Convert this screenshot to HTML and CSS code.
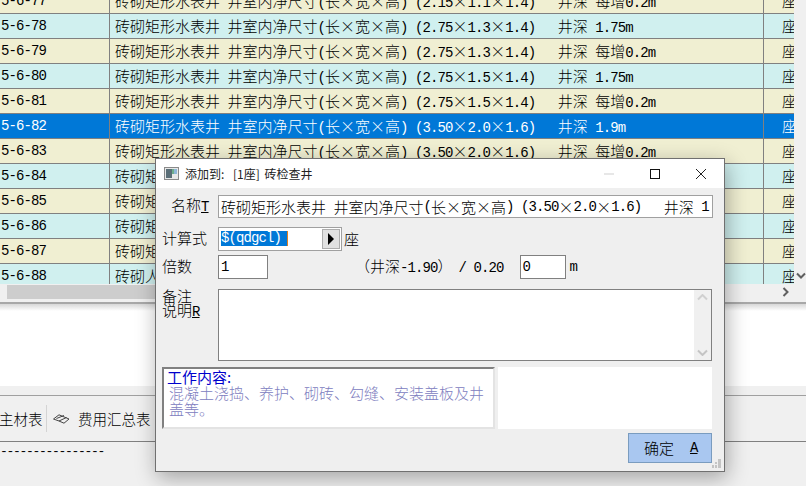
FILE: index.html
```html
<!DOCTYPE HTML>
<html lang="zh-CN">

<head>
  <meta charset="utf-8">
  <title>添加到</title>
  <link rel="stylesheet" href="styles.css">
</head>

<body>

  <div class="top">
    <div class="grid">
      <div class="row"><div class="code">5-6-77</div><div class="name">砖砌矩形水表井<span class="hw"> </span>井室内净尺寸<span class="hw">(</span>长×宽×高<span class="hw">) (2.15</span>×<span class="hw">1.1</span>×<span class="hw">1.4)   </span>井深<span class="hw"> </span>每增<span class="hw">0.2m</span></div><div class="unit">座</div></div>
      <div class="row"><div class="code">5-6-78</div><div class="name">砖砌矩形水表井<span class="hw"> </span>井室内净尺寸<span class="hw">(</span>长×宽×高<span class="hw">) (2.75</span>×<span class="hw">1.3</span>×<span class="hw">1.4)   </span>井深<span class="hw"> 1.75m</span></div><div class="unit">座</div></div>
      <div class="row"><div class="code">5-6-79</div><div class="name">砖砌矩形水表井<span class="hw"> </span>井室内净尺寸<span class="hw">(</span>长×宽×高<span class="hw">) (2.75</span>×<span class="hw">1.3</span>×<span class="hw">1.4)   </span>井深<span class="hw"> </span>每增<span class="hw">0.2m</span></div><div class="unit">座</div></div>
      <div class="row"><div class="code">5-6-80</div><div class="name">砖砌矩形水表井<span class="hw"> </span>井室内净尺寸<span class="hw">(</span>长×宽×高<span class="hw">) (2.75</span>×<span class="hw">1.5</span>×<span class="hw">1.4)   </span>井深<span class="hw"> 1.75m</span></div><div class="unit">座</div></div>
      <div class="row"><div class="code">5-6-81</div><div class="name">砖砌矩形水表井<span class="hw"> </span>井室内净尺寸<span class="hw">(</span>长×宽×高<span class="hw">) (2.75</span>×<span class="hw">1.5</span>×<span class="hw">1.4)   </span>井深<span class="hw"> </span>每增<span class="hw">0.2m</span></div><div class="unit">座</div></div>
      <div class="row selected"><div class="code">5-6-82</div><div class="name">砖砌矩形水表井<span class="hw"> </span>井室内净尺寸<span class="hw">(</span>长×宽×高<span class="hw">) (3.50</span>×<span class="hw">2.0</span>×<span class="hw">1.6)   </span>井深<span class="hw"> 1.9m</span></div><div class="unit">座</div></div>
      <div class="row"><div class="code">5-6-83</div><div class="name">砖砌矩形水表井<span class="hw"> </span>井室内净尺寸<span class="hw">(</span>长×宽×高<span class="hw">) (3.50</span>×<span class="hw">2.0</span>×<span class="hw">1.6)   </span>井深<span class="hw"> </span>每增<span class="hw">0.2m</span></div><div class="unit">座</div></div>
      <div class="row"><div class="code">5-6-84</div><div class="name">砖砌矩形水表井</div><div class="unit">座</div></div>
      <div class="row"><div class="code">5-6-85</div><div class="name">砖砌矩形水表井</div><div class="unit">座</div></div>
      <div class="row"><div class="code">5-6-86</div><div class="name">砖砌矩形水表井</div><div class="unit">座</div></div>
      <div class="row"><div class="code">5-6-87</div><div class="name">砖砌矩形水表井</div><div class="unit">座</div></div>
      <div class="row"><div class="code">5-6-88</div><div class="name">砖砌人孔</div><div class="unit">座</div></div>
    </div>
    <div class="vscroll">
      <svg width="10" height="8" viewBox="0 0 10 8"><path d="M1 1.5 5 5.5 9 1.5" fill="none" stroke="#606060" stroke-width="2"/></svg>
    </div>
  </div>

  <div class="hscroll">
    <div class="thumb"></div>
    <svg width="8" height="10" viewBox="0 0 8 10"><path d="M1.5 1 5.5 5 1.5 9" fill="none" stroke="#606060" stroke-width="2"/></svg>
  </div>

  <div class="splitter"></div>
  <div class="blank"></div>

  <div class="tabs">
    <div class="tab tab-first">主材表</div>
    <div class="tab">
      <svg class="tab-icon" width="17" height="10" viewBox="0 0 17 10"><path d="M.5 5 6 .8 16 5 11 9.2 6 7 .5 5ZM3.5 4.5 11 1.5M6 7 13.5 3.5" fill="none" stroke="#444"/></svg>
      费用汇总表
    </div>
  </div>

  <div class="log">----------------</div>

  <div class="dialog">
    <div class="titlebar">
      <svg class="app-icon" width="15" height="13" viewBox="0 0 15 13">
        <rect x=".5" y=".5" width="14" height="12" fill="#e8e8e8" stroke="#8a8a8a"/>
        <rect x="2" y="2" width="6" height="9" fill="#5b6f78"/>
        <rect x="8" y="2" width="2" height="5" fill="#6fae8c"/>
        <rect x="10" y="2" width="3" height="5" fill="#8fb7d8"/>
      </svg>
      <span class="title-text">添加到: <span class="title-count">[1座]</span> 砖检查井</span>
      <svg class="win-btn" width="12" height="12" viewBox="0 0 12 12"><path d="M1 6H11" stroke="#cfcfcf"/></svg>
      <svg class="win-btn" width="12" height="12" viewBox="0 0 12 12"><rect x="1.5" y="1.5" width="9" height="9" fill="none" stroke="#111"/></svg>
      <svg class="win-btn" width="12" height="12" viewBox="0 0 12 12"><path d="M1 1 11 11M11 1 1 11" stroke="#222"/></svg>
    </div>

    <div class="dialog-body">
      <div class="field name-field">
        <label class="label label-name">名称<span class="key">T</span></label>
        <div class="input name-input">砖砌矩形水表井<span class="hw"> </span>井室内净尺寸<span class="hw">(</span>长×宽×高<span class="hw">) (3.50</span>×<span class="hw">2.0</span>×<span class="hw">1.6)   </span>井深<span class="hw"> 1</span></div>
      </div>

      <div class="field calc-field">
        <label class="label">计算式</label>
        <div class="input calc-input">
          <span class="sel hw">$(qdgcl)</span>
          <span class="calc-btn"><svg width="8" height="12" viewBox="0 0 8 12"><path d="M1 0 7 6 1 12Z" fill="#000"/></svg></span>
        </div>
        <span class="after">座</span>
      </div>

      <div class="field times-field">
        <label class="label">倍数</label>
        <div class="input small-input"><span class="hw">1</span></div>
        <span class="formula">（井深<span class="hw">-1.90</span>）<span class="hw divide">/ 0.20</span></span>
        <div class="input small-input extra-input"><span class="hw">0</span></div>
        <span class="after hw">m</span>
      </div>

      <div class="field note-field">
        <label class="label label-note">备注<br>说明<span class="key">R</span></label>
        <div class="textarea">
          <div class="textarea-scroll">
            <svg width="11" height="7" viewBox="0 0 11 7"><path d="M1 5.5 5.5 1 10 5.5" fill="none" stroke="#d0d0d0" stroke-width="2"/></svg>
            <svg width="11" height="7" viewBox="0 0 11 7"><path d="M1 1.5 5.5 6 10 1.5" fill="none" stroke="#c4c4c4" stroke-width="2"/></svg>
          </div>
        </div>
      </div>

      <div class="info">
        <div class="work">
          <div class="work-title">工作内容:</div>
          <div class="work-text">混凝土浇捣、养护、砌砖、勾缝、安装盖板及井盖等。</div>
        </div>
        <div class="info-right"></div>
      </div>

      <div class="actions">
        <button class="ok">确定<span class="ok-key">A</span></button>
      </div>
    </div>

    <svg class="grip" width="9" height="9" viewBox="0 0 9 9"><path d="M6 0h3v3H6zM3 3h2v2H3zM6 3h3v3H6zM0 6h2v3H0zM3 6h2v3H3zM6 6h3v3H6z" fill="#c4c4c4"/></svg>
  </div>

</body>

</html>
```
FILE: styles.css
```css
html, body {
  margin: 0;
  height: 100%;
}

body {
  position: relative;
  width: 806px;
  height: 486px;
  overflow: hidden;
  background: #f0f0f0;
  color: #000;
  font: 300 15px/18px "Noto Sans CJK SC", sans-serif;
}

/* half width latin, 7.5px a char like the old bitmap font */
.hw,
.key,
.ok-key,
.code {
  font: 14px/18px "Liberation Mono", monospace;
  letter-spacing: -.9px;
  white-space: pre;
}

.top {
  display: flex;
  height: 284px;
  overflow: hidden;
}

.grid {
  width: 794px;
  overflow: hidden;
}

.row {
  display: grid;
  grid-template-columns: 109px 654px 31px;
  height: 25px;
  box-sizing: border-box;
  border-bottom: 1px solid #808080;
  background: #f0efd2;
  line-height: 24px;
  white-space: nowrap;
}

.row:first-child {
  margin-top: -11px;
}

.row:nth-child(even) {
  background: #d0f0ef;
}

.row.selected {
  background: #0078d7;
  color: #fff;
}

.code {
  padding-left: 1px;
  line-height: 24px;
}

.name {
  overflow: hidden;
  padding-left: 5px;
  border-left: 1px solid #808080;
}

.unit {
  overflow: hidden;
  padding-left: 18px;
  border-left: 1px solid #808080;
}

.vscroll {
  display: flex;
  flex: 1;
  align-items: flex-end;
  justify-content: flex-end;
  padding-bottom: 4px;
}

.hscroll {
  display: flex;
  align-items: center;
  justify-content: space-between;
  height: 16px;
  padding: 0 16px 0 7px;
}

.thumb {
  width: 700px;
  height: 14px;
  background: #cdcdcd;
}

.splitter {
  height: 2px;
  margin-top: 2px;
  background: #a8a8a8;
}

.blank {
  height: 82px;
  background: linear-gradient(#d8d8d8, #fff 7px);
}

.tabs {
  display: flex;
  align-items: center;
  height: 47px;
  margin-top: 9px;
  border-top: 1px solid #a0a0a0;
  border-bottom: 1px solid #808080;
  box-sizing: border-box;
}

.tab {
  display: flex;
  align-items: center;
  height: 27px;
  font-size: 14.5px;
}

.tab-first {
  width: 47px;
  margin-left: -1px;
  padding-left: 0;
  border-right: 1px solid #d4d4d4;
}

.tab-icon {
  margin: 0 8px 0 6px;
}

.log {
  padding-top: 2px;
  font: 13px/16px "Liberation Mono", monospace;
  letter-spacing: -1.3px;
}

.dialog {
  position: absolute;
  left: 155px;
  top: 158px;
  width: 568px;
  height: 312px;
  border: 1px solid #707070;
  background: #efefef;
  box-shadow: 2px 6px 20px rgba(0, 0, 0, .32);
}

.titlebar {
  display: flex;
  align-items: center;
  height: 29px;
  padding: 0 17px 0 8px;
  background: #fff;
}

.app-icon {
  margin-right: 6px;
}

.title-text {
  flex: 1;
  color: #222;
  font-size: 12px;
  font-weight: 400;
}

.title-count {
  margin: 0 2px 0 6px;
}

.win-btn {
  margin-left: 34px;
}

.dialog-body {
  padding: 7px 11px 0 6px;
}

.field {
  display: flex;
  align-items: center;
}

.label {
  width: 56px;
  flex: none;
  padding-bottom: 2px;
}

.label-name {
  box-sizing: border-box;
  padding-left: 9px;
}

.key {
  text-decoration: underline;
}

.input {
  display: flex;
  align-items: center;
  box-sizing: border-box;
  padding-left: 2px;
  background: #fff;
  white-space: nowrap;
}

.name-input {
  width: 496px;
  height: 23px;
  overflow: hidden;
  border: 1px solid #a0a0a0;
}

.calc-field {
  margin-top: 9px;
}

.calc-input {
  position: relative;
  width: 124px;
  height: 24px;
  border: 1px solid #a0a0a0;
}

.sel {
  margin-bottom: 1px;
  padding-right: 6px;
  background: #0078d7;
  box-shadow: 1px 0 0 #e08020;
  color: #fff;
  line-height: 15px;
}

.calc-btn {
  display: flex;
  align-items: center;
  justify-content: center;
  width: 18px;
  height: 20px;
  margin-left: auto;
  margin-right: 1px;
  border: 1px solid #adadad;
  box-sizing: border-box;
  background: #e1e1e1;
}

.after {
  margin-left: 2px;
  padding-bottom: 1px;
}

.times-field {
  margin-top: 4px;
}

.small-input {
  width: 50px;
  height: 24px;
  border: 1px solid #808080;
}

.formula {
  margin-left: 87px;
  white-space: nowrap;
}

.divide {
  margin-left: 6px;
}

.extra-input {
  width: 46px;
  margin-left: 16px;
}

.times-field .after {
  margin-left: 4px;
}

.note-field {
  align-items: flex-start;
  margin-top: 10px;
}

.label-note {
  padding: 0;
  line-height: 14px;
}

.textarea {
  display: flex;
  justify-content: flex-end;
  box-sizing: border-box;
  width: 494px;
  height: 72px;
  border: 1px solid #808080;
  background: #fff;
}

.textarea-scroll {
  display: flex;
  flex-direction: column;
  align-items: center;
  justify-content: space-between;
  width: 17px;
  padding: 4px 0;
  box-sizing: border-box;
  background: #f0f0f0;
}

.info {
  display: flex;
  gap: 3px;
  margin-top: 6px;
}

.work {
  box-sizing: border-box;
  width: 333px;
  height: 62px;
  padding: 0 9px 0 3px;
  border: 2px solid;
  border-color: #808080 #e3e3e3 #e3e3e3 #808080;
  background: #fff;
  line-height: 16px;
}

.work-title {
  color: #0000cc;
  font-weight: 400;
}

.work-text {
  padding-left: 2px;
  color: #8080c0;
}

.info-right {
  width: 214px;
  height: 62px;
  background: #fff;
}

.actions {
  display: flex;
  justify-content: flex-end;
  margin-top: 4px;
  padding-right: 1px;
}

.ok {
  display: flex;
  align-items: center;
  box-sizing: border-box;
  width: 84px;
  height: 30px;
  padding: 0 0 0 15px;
  border: 1px solid #7a9cbf;
  background: #a9c7f0;
  color: #000;
  font: 300 15px/18px "Noto Sans CJK SC", sans-serif;
}

.ok-key {
  margin-left: 16px;
  text-decoration: underline;
}

.grip {
  position: absolute;
  right: 3px;
  bottom: 3px;
}
```
